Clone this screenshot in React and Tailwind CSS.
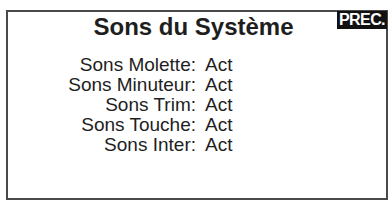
export default function App() {
  const rows = [
    ["Sons Molette:", "Act"],
    ["Sons Minuteur:", "Act"],
    ["Sons Trim:", "Act"],
    ["Sons Touche:", "Act"],
    ["Sons Inter:", "Act"],
  ];

  return (
    <div
      className="w-[390px] h-[201px] bg-white overflow-hidden pt-[10px] pl-[6px]"
      style={{ fontFamily: '"Liberation Sans", Arial, sans-serif' }}
    >
      <div className="relative w-[382px] h-[190px] border-2 border-[#4a4a4a] text-[#1e1e1e]">
        {/* badge in the corner */}
        <div className="absolute top-[-1px] right-[-1px] w-[50px] h-[18px] bg-[#111] text-white text-[16px] font-bold leading-[18px] tracking-[-0.6px] text-center">
          PREC.
        </div>

        <h1 className="pt-[3px] pr-[7px] text-center text-[24px] leading-[24px] font-bold">
          Sons du Système
        </h1>

        <div className="mt-[16px] grid grid-cols-[188px_auto] text-[19px] leading-[20px]">
          {rows.map(([label, value]) => (
            <div key={label} className="contents">
              <div className="text-right">{label}</div>
              <div className="pl-[9px]">{value}</div>
            </div>
          ))}
        </div>
      </div>
    </div>
  );
}
